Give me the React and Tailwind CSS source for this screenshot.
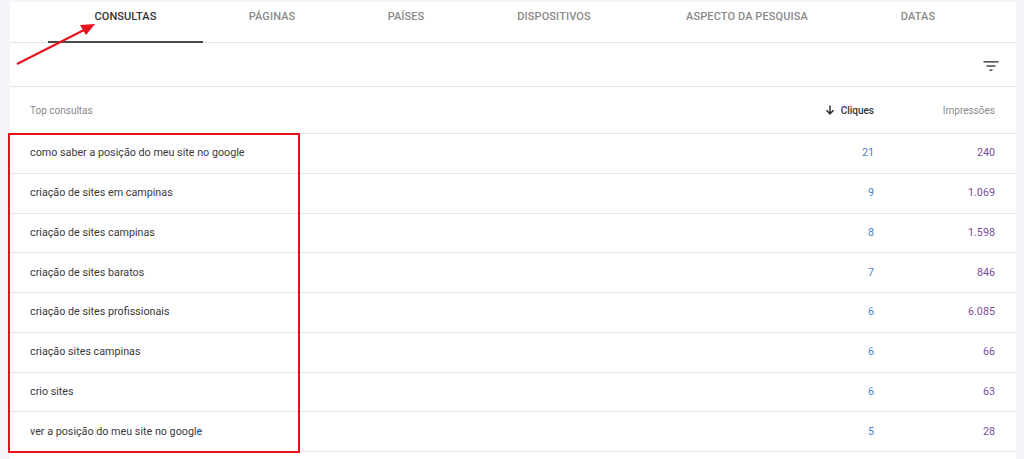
import React from "react";

const tabs = [
  { label: "CONSULTAS", w: "w-[155px]", active: true },
  { label: "PÁGINAS", w: "w-[138px]" },
  { label: "PAÍSES", w: "w-[130px]" },
  { label: "DISPOSITIVOS", w: "w-[140px] pl-[26px]" },
  { label: "ASPECTO DA PESQUISA", w: "w-[272px]" },
  { label: "DATAS", w: "w-[70px]" },
];

const rows = [
  ["como saber a posição do meu site no google", "21", "240"],
  ["criação de sites em campinas", "9", "1.069"],
  ["criação de sites campinas", "8", "1.598"],
  ["criação de sites baratos", "7", "846"],
  ["criação de sites profissionais", "6", "6.085"],
  ["criação sites campinas", "6", "66"],
  ["crio sites", "6", "63"],
  ["ver a posição do meu site no google", "5", "28"],
];

export default function App() {
  return (
    <div
      className="relative w-[1024px] h-[459px] overflow-hidden bg-[#f3f5fb] pl-[10px] pr-[8px] pt-[2px]"
      style={{ fontFamily: "Roboto, 'Liberation Sans', sans-serif" }}
    >
      <div className="bg-white h-full">
        {/* Tabs */}
        <div className="flex h-[41px] border-b border-[#e3e3e3] pl-[38px]">
          {tabs.map((t) => (
            <div
              key={t.label}
              className={`${t.w} relative flex items-start justify-center pt-[7px] text-[11px] font-medium tracking-[0.1px] ${
                t.active ? "text-[#333333]" : "text-[#8a8a8a]"
              }`}
            >
              {t.label}
              {t.active && (
                <div className="absolute left-0 right-0 bottom-[-1px] h-[2px] bg-[#4a4a4a]" />
              )}
            </div>
          ))}
        </div>
        {/* Filter row */}
        <div className="flex h-[44px] items-center justify-end border-b border-[#e3e3e3] pr-[17px]">
          <svg width="16" height="12" viewBox="0 0 16 12" className="mt-[3px]">
            <rect x="0.5" y="1" width="15" height="1.6" fill="#555" />
            <rect x="3.5" y="5.2" width="9" height="1.6" fill="#555" />
            <rect x="6.5" y="9.4" width="3" height="1.6" fill="#555" />
          </svg>
        </div>
        {/* Header */}
        <div className="flex h-[47px] items-center border-b border-[#e3e3e3] pl-[20px] text-[10px]">
          <div className="flex-1 text-[#8a8a8a]">Top consultas</div>
          <div className="w-[120px] flex items-center justify-end gap-[6px] text-[#333] font-medium">
            <svg width="10" height="10" viewBox="0 0 10 10">
              <path d="M5 0.5 V8.5 M1.5 5.2 L5 8.8 L8.5 5.2" stroke="#333" strokeWidth="1.5" fill="none" />
            </svg>
            Cliques
          </div>
          <div className="w-[142px] pr-[21px] text-right text-[#8a8a8a]">Impressões</div>
        </div>
        {/* Rows */}
        {rows.map((r) => (
          <div
            key={r[0]}
            className="flex h-[39.75px] items-center border-b border-[#e6e6e6] pl-[20px] text-[10.75px]"
          >
            <div className="flex-1 text-[#3a3a3a]">{r[0]}</div>
            <div className="w-[120px] text-right text-[#4f7fc3]">{r[1]}</div>
            <div className="w-[142px] pr-[21px] text-right text-[#7a4d98]">{r[2]}</div>
          </div>
        ))}
      </div>

      {/* Red highlight box */}
      <div className="absolute left-[8px] top-[133px] w-[292px] h-[320px] border-2 border-[#e8101a]" />

      {/* Red arrow */}
      <svg className="absolute left-0 top-0" width="120" height="80" viewBox="0 0 120 80">
        <line x1="17" y1="64" x2="86" y2="29" stroke="#e8101a" strokeWidth="2" />
        <polygon points="95,24 80,25 86,35" fill="#e8101a" />
      </svg>
    </div>
  );
}
